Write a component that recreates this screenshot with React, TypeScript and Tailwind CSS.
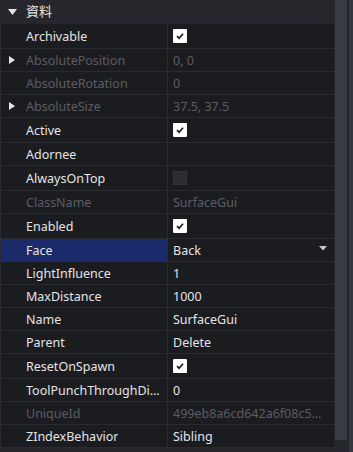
type Prop = {
  name: string;
  value?: string;
  kind?: 'text' | 'check' | 'uncheck' | 'select';
  disabled?: boolean;
  expand?: boolean;
  selected?: boolean;
};

const props: Prop[] = [
  { name: 'Archivable', kind: 'check' },
  { name: 'AbsolutePosition', value: '0, 0', disabled: true, expand: true },
  { name: 'AbsoluteRotation', value: '0', disabled: true },
  { name: 'AbsoluteSize', value: '37.5, 37.5', disabled: true, expand: true },
  { name: 'Active', kind: 'check' },
  { name: 'Adornee', value: '' },
  { name: 'AlwaysOnTop', kind: 'uncheck' },
  { name: 'ClassName', value: 'SurfaceGui', disabled: true },
  { name: 'Enabled', kind: 'check' },
  { name: 'Face', value: 'Back', kind: 'select', selected: true },
  { name: 'LightInfluence', value: '1' },
  { name: 'MaxDistance', value: '1000' },
  { name: 'Name', value: 'SurfaceGui' },
  { name: 'Parent', value: 'Delete' },
  { name: 'ResetOnSpawn', kind: 'check' },
  { name: 'ToolPunchThroughDistance', value: '0' },
  { name: 'UniqueId', value: '499eb8a6cd642a6f08c55e0b1d7c3a92', disabled: true },
  { name: 'ZIndexBehavior', value: 'Sibling' },
];

function Checkbox({ checked }: { checked: boolean }) {
  if (!checked) {
    return <div className="w-[14px] h-[14px] rounded-[1px] bg-[#2c2d32] border border-[#34353a]" />;
  }
  return (
    <div className="w-[14px] h-[14px] rounded-[1px] bg-white flex items-center justify-center">
      <svg width="10" height="10" viewBox="0 0 10 10">
        <path d="M2 5.2 L4.1 7.2 L8 2.8" stroke="#1b1c20" strokeWidth="1.7" fill="none" />
      </svg>
    </div>
  );
}

function Row({ p }: { p: Prop }) {
  const isCheck = p.kind === 'check' || p.kind === 'uncheck';
  const labelColor = p.disabled ? 'text-[#5b5c62]' : 'text-[#e4e4e6]';
  return (
    <div
      className={`grid grid-cols-[167px_1fr] border-b border-[#2a2b30] ${isCheck ? 'h-[25px]' : 'h-[23px]'}`}
    >
      <div
        className={`relative flex items-center pl-[25px] pr-[2px] border-r border-[#2a2b30] min-w-0 ${
          p.selected ? 'bg-[#1a2a6b]' : ''
        }`}
      >
        {p.expand && (
          <svg className="absolute left-[8px] top-1/2 -translate-y-1/2" width="6" height="8" viewBox="0 0 6 8">
            <path d="M0 0 L6 4 L0 8 Z" fill="#e4e4e6" />
          </svg>
        )}
        <span className={`truncate pt-[2px] ${labelColor}`}>{p.name}</span>
      </div>
      <div className="flex items-center pl-[5px] pr-[7px] min-w-0">
        {isCheck ? (
          <Checkbox checked={p.kind === 'check'} />
        ) : (
          <>
            <span className={`truncate flex-1 pt-[2px] ${labelColor}`}>{p.value}</span>
            {p.kind === 'select' && (
              <svg className="mb-[3px]" width="8" height="5" viewBox="0 0 8 5">
                <path d="M0 0 L8 0 L4 4.5 Z" fill="#c8c8cc" />
              </svg>
            )}
          </>
        )}
      </div>
    </div>
  );
}

export default function App() {
  return (
    <div
      className="w-[353px] h-[452px] bg-[#25272c] flex overflow-hidden text-[12.5px]"
      style={{ fontFamily: '"Noto Sans", "Noto Sans CJK SC", sans-serif' }}
    >
      <div className="w-[334px] flex flex-col">
        <div className="h-[24px] shrink-0 flex items-center bg-[#25272c] relative pl-[26px]">
          <svg className="absolute left-[8px] top-[9px]" width="9" height="6" viewBox="0 0 9 6">
            <path d="M0 0 L9 0 L4.5 6 Z" fill="#e4e4e6" />
          </svg>
          <span className="text-[#e4e4e6] text-[13px]">資料</span>
        </div>
        <div className="bg-[#1b1c20] border-l border-[#2a2b30]">
          {props.map((p) => (
            <Row key={p.name} p={p} />
          ))}
        </div>
      </div>
      <div className="flex-1 flex bg-[#25272c]">
        <div className="ml-[1px] w-[12px] h-[440px] bg-[#393b44]" />
        <div className="ml-[2px] flex-1 bg-[#34363e]" />
      </div>
    </div>
  );
}
